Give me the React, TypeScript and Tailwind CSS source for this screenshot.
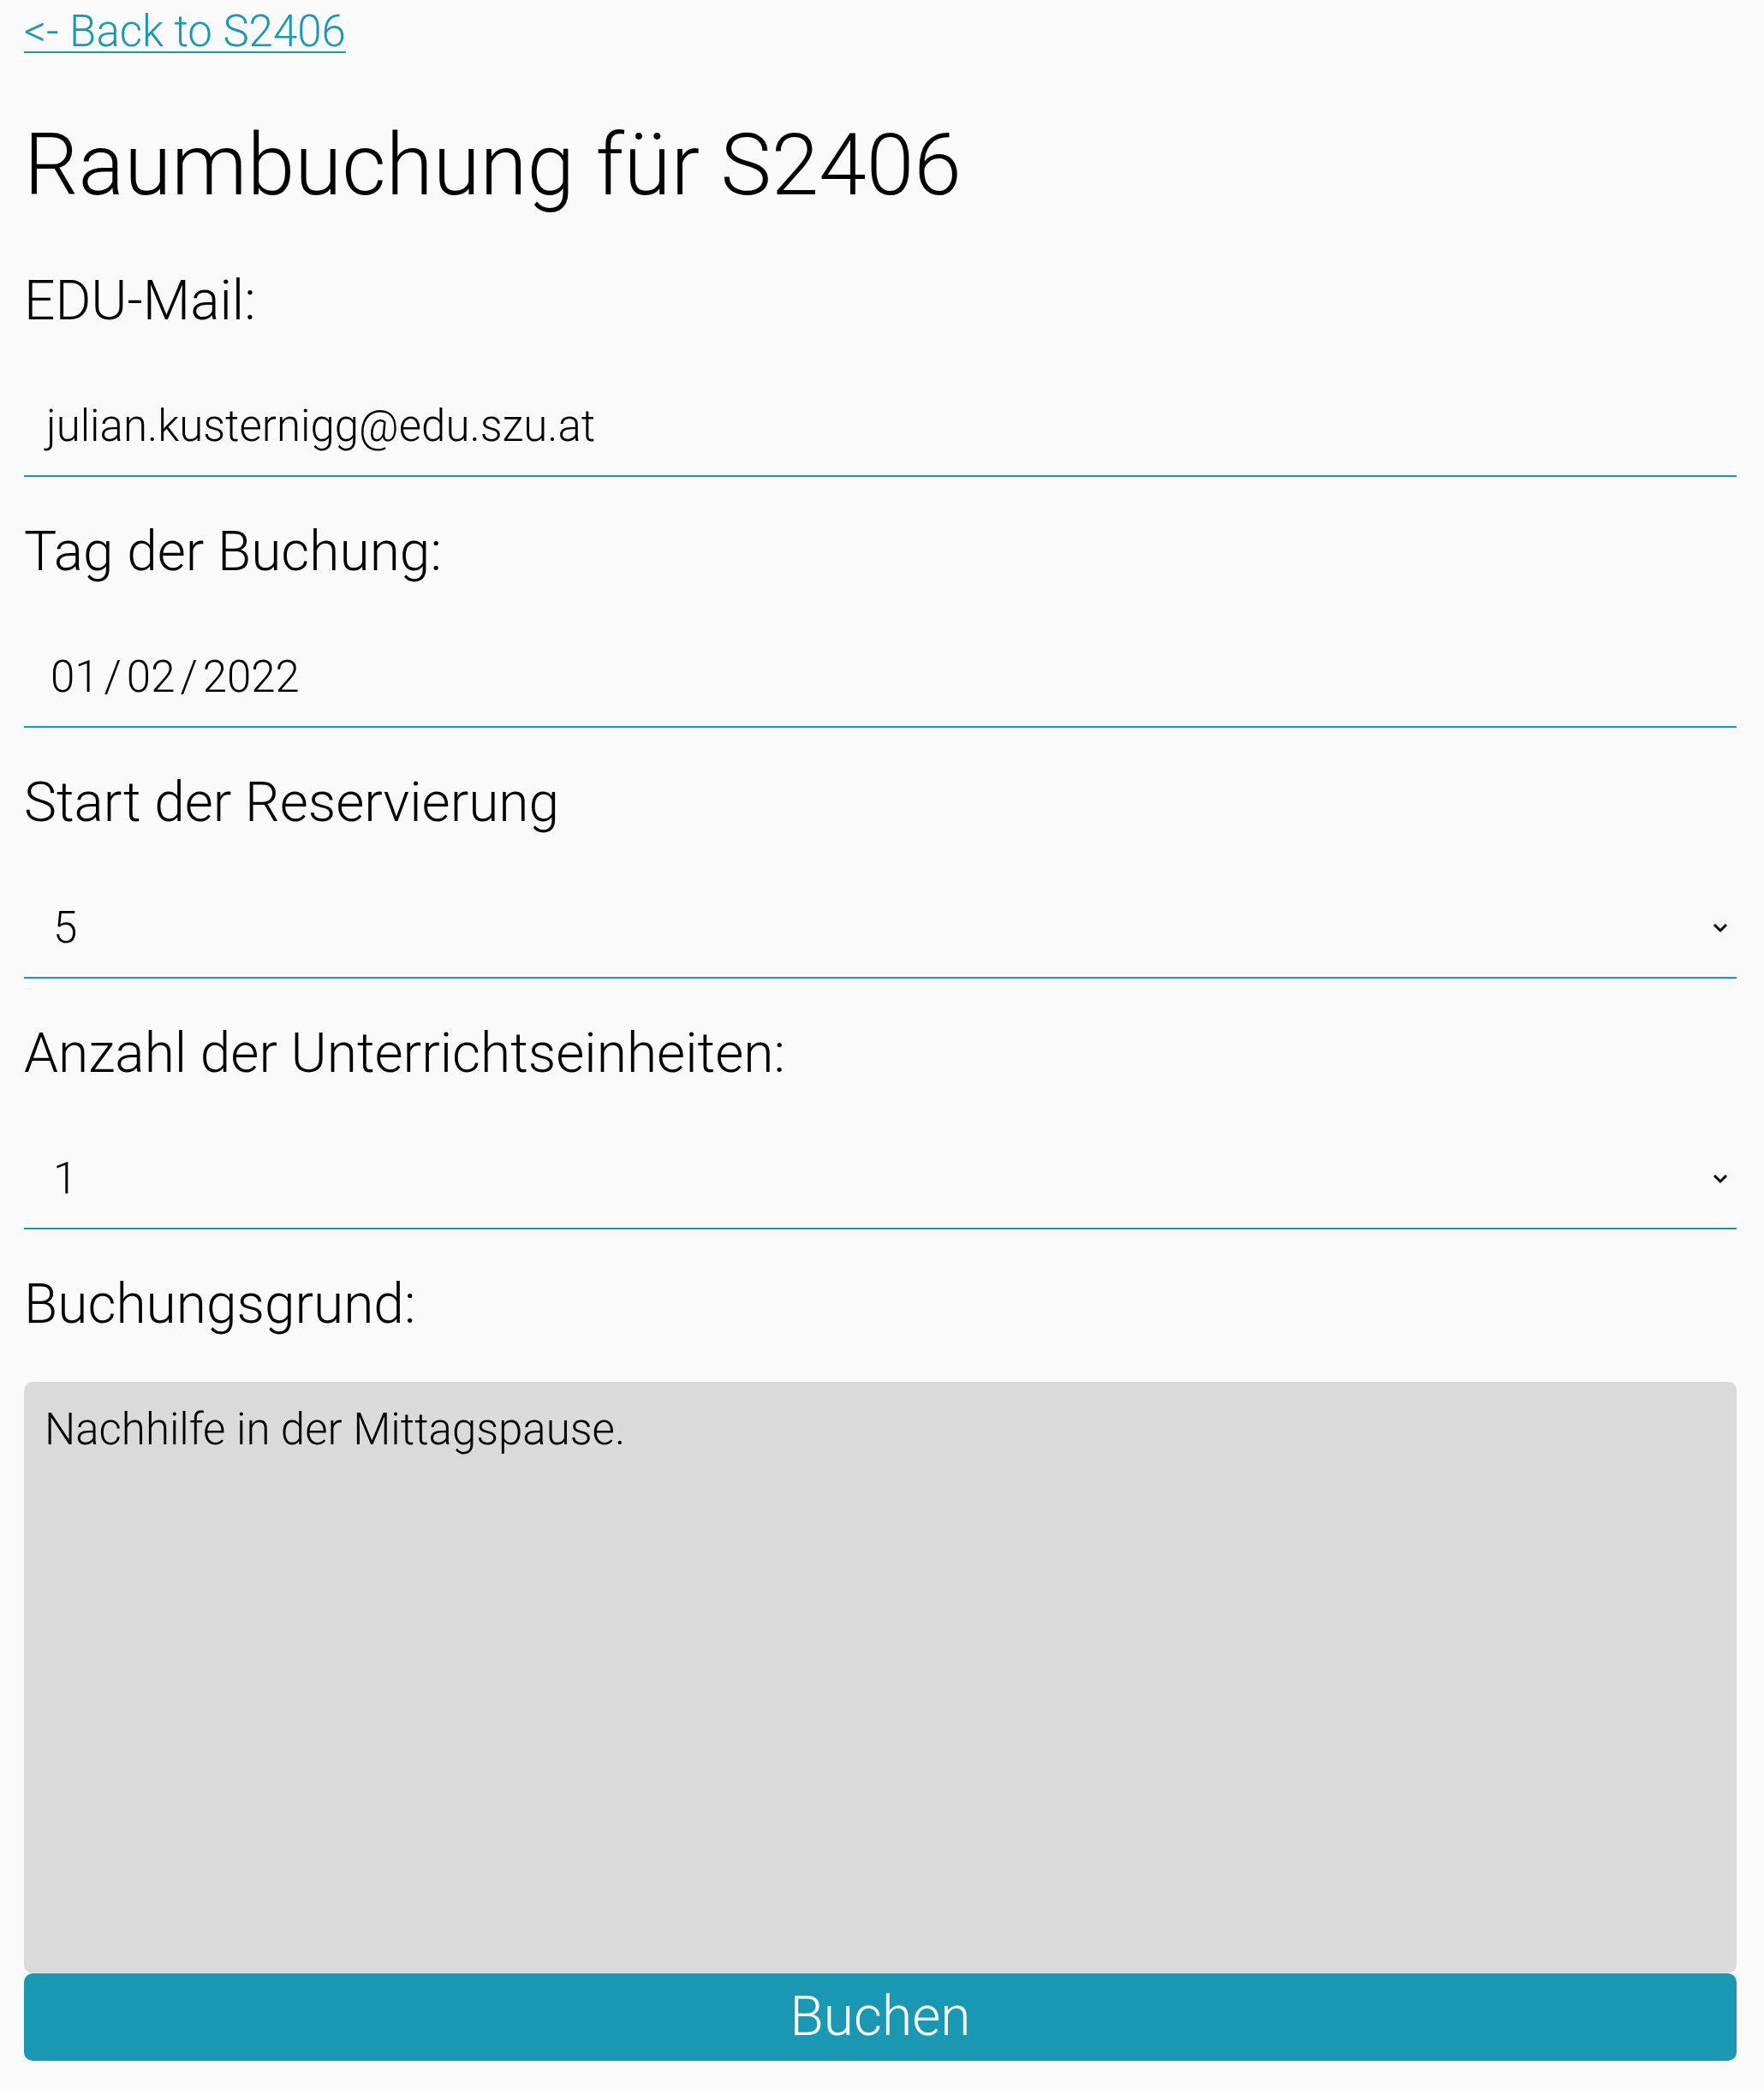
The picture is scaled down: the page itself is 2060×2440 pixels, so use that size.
import React from "react";

function Chevron() {
    return (
        <svg width="18" height="12" viewBox="0 0 18 12" className="shrink-0">
            <polyline points="2,2 9,9 16,2" fill="none" stroke="#000" strokeWidth="3" />
        </svg>
    );
}

function Field({ label, children }: { label: string; children: React.ReactNode }) {
    return (
        <div className="mb-[48px]">
            <div className="text-[64px] leading-[80px] mb-[49px]">{label}</div>
            <div className="h-[116px] border-b-2 border-[#1a98b3] flex items-center text-[51px] leading-[60px]">
                {children}
            </div>
        </div>
    );
}

export default function App() {
    return (
        <div
            className="min-h-[2440px] bg-[#fafafa] text-black px-[28px] font-light"
            style={{ fontFamily: "Roboto, 'Liberation Sans', sans-serif" }}
        >
            <div className="w-[2000px]">
                <a
                    href="#"
                    className="block w-fit text-[51px] leading-[74px] text-[#1a98b3] underline decoration-2 underline-offset-[6px]"
                >
                    &lt;- Back to S2406
                </a>

                <h1 className="text-[100px] leading-[118px] mt-[60px] mb-[60px] font-light">Raumbuchung für S2406</h1>

                <Field label="EDU-Mail:">
                    <span className="pl-[26px]">julian.kusternigg@edu.szu.at</span>
                </Field>

                <Field label="Tag der Buchung:">
                    <span className="pl-[31px]">
                        01<span className="px-[6px]">/</span>02<span className="px-[6px]">/</span>2022
                    </span>
                </Field>

                <Field label="Start der Reservierung">
                    <div className="flex items-center justify-between w-full pl-[34px] pr-[10px]">
                        <span>5</span>
                        <Chevron />
                    </div>
                </Field>

                <Field label="Anzahl der Unterrichtseinheiten:">
                    <div className="flex items-center justify-between w-full pl-[34px] pr-[10px]">
                        <span>1</span>
                        <Chevron />
                    </div>
                </Field>

                <div className="text-[64px] leading-[80px] mb-[50px]">Buchungsgrund:</div>
                <div className="h-[691px] bg-[#dadada] rounded-[10px] pt-[26px] pl-[24px] text-[51px] leading-[60px]">
                    Nachhilfe in der Mittagspause.
                </div>
                <button className="w-full h-[102px] bg-[#1a98b3] rounded-[10px] text-white text-[64px] leading-[80px] font-light">
                    Buchen
                </button>
            </div>
        </div>
    );
}
